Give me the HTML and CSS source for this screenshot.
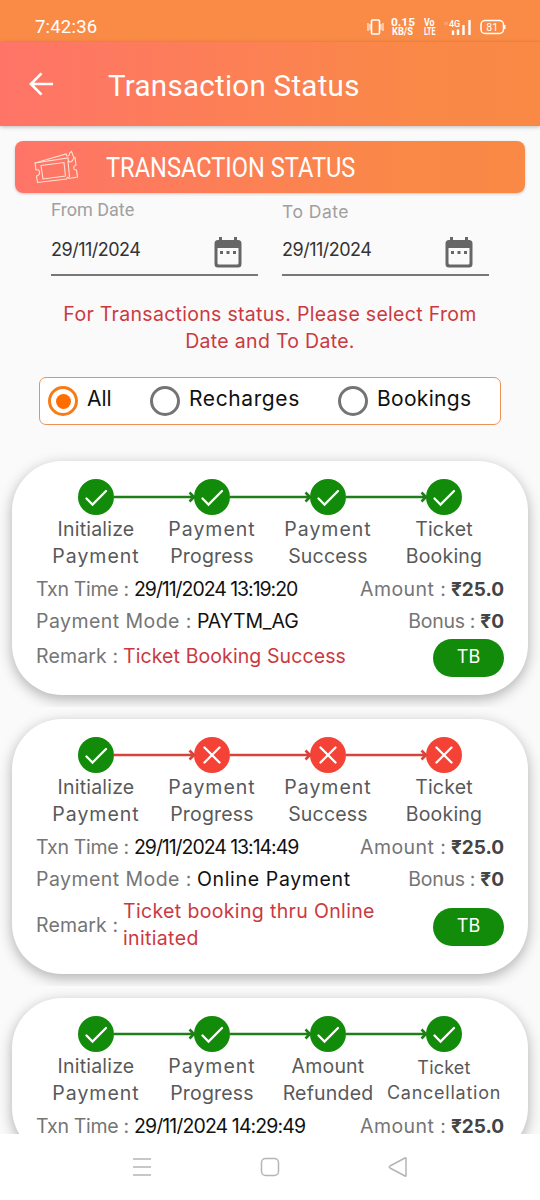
FILE: index.html
```html
<!DOCTYPE html>
<html lang="en">
<head>
<meta charset="utf-8">
<title>Transaction Status</title>
<link rel="stylesheet" href="styles.css">
</head>
<body>
<svg class="defs" aria-hidden="true">
  <symbol id="ok" viewBox="0 0 36 36"><circle cx="18" cy="18" r="18" fill="#128a0a"/><path d="M8.500 19.500L14.500 25.500L28 12" fill="none" stroke="#fff" stroke-width="2.300" stroke-linecap="round"/></symbol>
  <symbol id="fail" viewBox="0 0 36 36"><circle cx="18" cy="18" r="18" fill="#f44336"/><path d="M10.500 10.500L25.500 25.500M25.500 10.500L10.500 25.500" fill="none" stroke="#fff" stroke-width="2.300" stroke-linecap="round"/></symbol>
  <symbol id="arrow" viewBox="0 0 82 12"><path d="M0 6H80M75.500 1.500L80 6L75.500 10.500" fill="none" stroke="currentColor" stroke-width="2.600"/></symbol>
  <symbol id="calendar" viewBox="0 0 28 32"><path d="M4 3H24Q27.500 3 27.500 6.500V27Q27.500 30.500 24 30.500H4Q0.500 30.500 0.500 27V6.500Q0.500 3 4 3ZM3.500 11V26Q3.500 27.500 5 27.500H23Q24.500 27.500 24.500 26V11Z" fill="#666" fill-rule="evenodd"/><path d="M5 0H8V4H5ZM20 0H23V4H20ZM6 14H9V17H6ZM12.500 14H15.500V17H12.500ZM19 14H22V17H19Z" fill="#666"/></symbol>
</svg>
<div class="screen">
  <header class="statusbar">
    <span class="clock">7:42:36</span>
    <div class="indicators">
      <svg class="vibrate" viewBox="0 0 17 16"><rect x="4.500" y="1" width="8" height="14" rx="1" fill="none" stroke="#fff" stroke-width="1.600"/><path d="M1 4V12M16 4V12M3 5V11M14 5V11" stroke="#fff" stroke-width="1"/></svg>
      <svg class="speed" viewBox="0 0 25 20"><text x="0" y="9" textLength="24" lengthAdjust="spacingAndGlyphs" class="s1">0.15</text><text x="1" y="18" textLength="21" lengthAdjust="spacingAndGlyphs" class="s2">KB/S</text></svg>
      <svg class="volte" viewBox="0 0 12 20"><text x="0" y="9" textLength="10.500" lengthAdjust="spacingAndGlyphs" class="s2">Vo</text><text x="0" y="18" textLength="11.500" lengthAdjust="spacingAndGlyphs" class="s2">LTE</text></svg>
      <svg class="signal" viewBox="0 0 27 16"><text x="5" y="8" class="net">4G</text><path d="M1 3V6M3 3V6" stroke="#fff" opacity=".35"/><path d="M9 11.500V16M14 10.500V16M19.500 6V16M25.500 1V16" stroke="#fff" stroke-width="2.400"/></svg>
      <svg class="battery" viewBox="0 0 26 16"><rect x="1" y="1.500" width="22.500" height="13" rx="4" fill="none" stroke="#fff" stroke-width="1.500"/><path d="M24.800 6V10" stroke="#fff" stroke-width="1.400"/><text x="12.200" y="11.700" text-anchor="middle" class="level">81</text></svg>
    </div>
  </header>
  <nav class="appbar">
    <svg class="back" viewBox="0 0 26 24"><path d="M25 12H2M13 1L2 12L13 23" fill="none" stroke="#fff" stroke-width="2.800"/></svg>
    <h1>Transaction Status</h1>
  </nav>
  <main class="content">
    <div class="banner">
      <svg class="tickets" viewBox="0 0 44 34" fill="none" stroke="#ffe0d5" stroke-width="1.100"><path d="M1 13L34 8Q34 12 36.500 12Q39 11.500 39.500 8L41 7.500L42 15Q39 16 40 19Q40.500 20 42.500 20L43.500 27L35 28.500Q34 26 32.500 29L3.500 32.500L2.500 26Q6 25 5.500 22Q5 19 2 20Z"/><path d="M7 15.500L30 12.500L31.500 26L9 29ZM34 11L35.500 27M1 13L32 4L33 6Q36 6 35.500 3L37.500 1.500L40 8"/></svg>
      <h2>TRANSACTION STATUS</h2>
    </div>
    <div class="dates">
      <div class="field"><label class="from">From Date</label><div class="value"><span>29/11/2024</span><svg class="cal"><use href="#calendar"/></svg></div></div>
      <div class="field"><label class="to">To Date</label><div class="value"><span>29/11/2024</span><svg class="cal"><use href="#calendar"/></svg></div></div>
    </div>
    <p class="hint">For Transactions status. Please select From<br>Date and To Date.</p>
    <div class="filters">
      <div class="option all"><i class="radio on"></i><span>All</span></div>
      <div class="option recharges"><i class="radio"></i><span>Recharges</span></div>
      <div class="option bookings"><i class="radio"></i><span>Bookings</span></div>
    </div>
    <section class="slot"><article class="card">
      <div class="steps">
        <div class="step"><svg class="dot"><use href="#ok"/></svg><p>Initialize<br><span class="wide">Payment</span></p></div>
        <div class="step"><svg class="link green"><use href="#arrow"/></svg><svg class="dot"><use href="#ok"/></svg><p><span class="wide">Payment</span><br>Progress</p></div>
        <div class="step"><svg class="link green"><use href="#arrow"/></svg><svg class="dot"><use href="#ok"/></svg><p><span class="wide">Payment</span><br>Success</p></div>
        <div class="step"><svg class="link green"><use href="#arrow"/></svg><svg class="dot"><use href="#ok"/></svg><p>Ticket<br>Booking</p></div>
      </div>
      <div class="row"><div><span class="k time">Txn Time :</span><span class="v stamp">29/11/2024 13:19:20</span></div><div><span class="k amount">Amount :</span><b class="sum">₹25.0</b></div></div>
      <div class="row"><div><span class="k mode">Payment Mode :</span><span class="v code">PAYTM_AG</span></div><div><span class="k bonus">Bonus :</span><b>₹0</b></div></div>
      <div class="row remark"><div><span class="k rem">Remark :</span><span class="note">Ticket Booking Success</span></div><button class="tb">TB</button></div>
    </article></section>
    <section class="slot"><article class="card">
      <div class="steps">
        <div class="step"><svg class="dot"><use href="#ok"/></svg><p>Initialize<br><span class="wide">Payment</span></p></div>
        <div class="step"><svg class="link red"><use href="#arrow"/></svg><svg class="dot"><use href="#fail"/></svg><p><span class="wide">Payment</span><br>Progress</p></div>
        <div class="step"><svg class="link red"><use href="#arrow"/></svg><svg class="dot"><use href="#fail"/></svg><p><span class="wide">Payment</span><br>Success</p></div>
        <div class="step"><svg class="link red"><use href="#arrow"/></svg><svg class="dot"><use href="#fail"/></svg><p>Ticket<br>Booking</p></div>
      </div>
      <div class="row"><div><span class="k time">Txn Time :</span><span class="v stamp">29/11/2024 13:14:49</span></div><div><span class="k amount">Amount :</span><b class="sum">₹25.0</b></div></div>
      <div class="row"><div><span class="k mode">Payment Mode :</span><span class="v online">Online Payment</span></div><div><span class="k bonus">Bonus :</span><b>₹0</b></div></div>
      <div class="row remark"><div><span class="k rem">Remark :</span><span class="note long">Ticket booking thru Online<br>initiated</span></div><button class="tb">TB</button></div>
    </article></section>
    <section class="slot"><article class="card">
      <div class="steps">
        <div class="step"><svg class="dot"><use href="#ok"/></svg><p>Initialize<br><span class="wide">Payment</span></p></div>
        <div class="step"><svg class="link green"><use href="#arrow"/></svg><svg class="dot"><use href="#ok"/></svg><p><span class="wide">Payment</span><br>Progress</p></div>
        <div class="step"><svg class="link green"><use href="#arrow"/></svg><svg class="dot"><use href="#ok"/></svg><p>Amount<br>Refunded</p></div>
        <div class="step"><svg class="link green"><use href="#arrow"/></svg><svg class="dot"><use href="#ok"/></svg><p class="small">Ticket<br><span class="cancel">Cancellation</span></p></div>
      </div>
      <div class="row"><div><span class="k time">Txn Time :</span><span class="v stamp late">29/11/2024 14:29:49</span></div><div><span class="k amount">Amount :</span><b class="sum">₹25.0</b></div></div>
    </article></section>
  </main>
  <footer class="navbar">
    <svg viewBox="0 0 20 20"><path d="M1 2H19M1 10H19M1 18H19"/></svg>
    <svg viewBox="0 0 20 20"><rect x="1.500" y="1.500" width="17" height="17" rx="4"/></svg>
    <svg viewBox="0 0 20 20"><path d="M18 1.500V18.500Q18 19.500 17 19L2 11Q0.500 10 2 9L17 1Q18 0.500 18 1.500Z"/></svg>
  </footer>
</div>
</body>
</html>
```
FILE: styles.css
```css
* { box-sizing: border-box; }
body { margin: 0; background: #fff; font-family: Inter, "Noto Sans", sans-serif; font-size: 19.500px; }
h1, h2, p { margin: 0; font-weight: 400; }
svg { display: block; flex: none; }
.defs { position: absolute; width: 0; height: 0; }
.screen { width: 540px; height: 1200px; display: flex; flex-direction: column; overflow: hidden; }

.statusbar { height: 42px; flex: none; background: #f98b46; color: #fff; display: flex; justify-content: space-between; align-items: center; padding: 12px 34px 0 35px; }
.clock { font: 400 18.5px/26px Roboto, sans-serif; letter-spacing: .2px; }
.indicators { display: flex; align-items: center; }
.vibrate { width: 17px; height: 16px; margin-right: 7px; }
.speed { width: 25px; height: 20px; margin-right: 8px; }
.volte { width: 12px; height: 20px; margin-right: 8px; }
.s1 { font: 700 11.500px Roboto, sans-serif; fill: #fff; }
.s2 { font: 700 10px Roboto, sans-serif; fill: #fff; }
.signal { width: 27px; height: 16px; margin-right: 9px; }
.net { font: 500 9px Roboto, sans-serif; fill: #fff; }
.battery { width: 26px; height: 16px; }
.level { font: 400 10.500px Roboto, sans-serif; fill: #fff; }

.appbar { height: 84px; flex: none; position: relative; background: linear-gradient(90deg, #ff7468, #fa8848 75%, #f98945); color: #fff; display: flex; align-items: center; padding-left: 29px; box-shadow: 0 1px 4px rgba(0,0,0,.25); z-index: 1; }
.back { width: 25px; height: 24px; margin: -1px 54px 0 0; }
.appbar h1 { font: 400 29.500px/36px Roboto, sans-serif; letter-spacing: .28px; padding-top: 3px; }

.content { flex: 1; min-height: 0; overflow: hidden; background: #fafafa; padding-top: 15px; }
.banner { height: 52px; margin: 0 15px; border-radius: 8px; background: linear-gradient(90deg, #ff7468, #fa8848 75%, #f98945); box-shadow: 0 1px 3px rgba(0,0,0,.2); color: #fff; display: flex; align-items: center; padding-left: 19px; }
.tickets { width: 44px; height: 34px; margin-right: 28px; }
.banner h2 { font: 400 27.500px/36px Roboto, sans-serif; transform: scaleX(.859); transform-origin: left; white-space: nowrap; padding-top: 2px; }
.dates { display: flex; gap: 24px; margin-left: 51px; height: 83px; }
.field { width: 207px; height: 83px; border-bottom: 2px solid #777; display: flex; flex-direction: column; }
.field label { color: #a0a0a0; font-size: 17.500px; letter-spacing: .5px; line-height: 24px; padding-top: 5px; height: 36px; }
.field .from { font-family: Roboto, sans-serif; font-size: 18px; letter-spacing: 0; }
.field .to { padding-top: 7px; }
.value { display: flex; justify-content: space-between; align-items: flex-start; padding: 8px 16px 0 0; color: #333; font-size: 18px; letter-spacing: -.5px; line-height: 25px; }
.cal { width: 28px; height: 32px; }
.hint { margin-top: 25px; color: #cb3940; text-align: center; line-height: 27px; letter-spacing: .3px; white-space: nowrap; }

.filters { height: 48px; width: 462px; margin: 22px 0 24px 39px; border: 1.500px solid #ed9254; border-radius: 7px; background: #fff; display: flex; align-items: center; padding-left: 8px; font-size: 21px; letter-spacing: .6px; color: #111; }
.option { display: flex; align-items: center; gap: 9px; white-space: nowrap; }
.option span { line-height: 28px; padding-bottom: 4px; }
.option.all { width: 102px; letter-spacing: 0; }
.option.recharges { width: 188px; }
.option.bookings { letter-spacing: .3px; }
.radio { width: 30px; height: 30px; border: 3px solid #747474; border-radius: 50%; display: grid; place-items: center; }
.radio.on { border-color: #f57c18; }
.radio.on::after { content: ""; width: 15px; height: 15px; border-radius: 50%; background: #ff6d00; }

.slot { padding: 12px; overflow: hidden; }
.card { background: #fff; border-radius: 50px; box-shadow: 0 4px 14px rgba(0,0,0,.3); padding: 18px 24px 16px; }
.steps { display: grid; grid-template-columns: repeat(4, 116px); margin-left: 2px; color: #595959; height: 94px; }
.step { position: relative; display: flex; flex-direction: column; align-items: center; text-align: center; }
.dot { width: 36px; height: 36px; }
.step p { line-height: 27px; padding-top: 1px; letter-spacing: .2px; white-space: nowrap; }
.step .wide { letter-spacing: 1px; }
.step .small { font-size: 18px; letter-spacing: .2px; line-height: 25px; padding-top: 3px; }
.cancel { letter-spacing: .75px; }
.link { position: absolute; width: 82px; height: 12px; left: -40px; top: 12px; }
.green { color: #1e7f18; }
.red { color: #d8433b; }
.row { display: flex; justify-content: space-between; align-items: center; height: 32px; white-space: nowrap; }
.row > div { display: flex; align-items: center; line-height: 27px; }
.k { color: #757575; }
.v { color: #111; }
.row b { color: #444; font-size: 19px; }
.time { width: 98px; letter-spacing: -.3px; }
.mode { width: 161px; letter-spacing: .45px; }
.amount { width: 91px; letter-spacing: .45px; }
.bonus { width: 72px; letter-spacing: -.3px; }
.rem { width: 87px; letter-spacing: .15px; }
.sum { width: 53px; }
.stamp { letter-spacing: -1.050px; }
.stamp.late { letter-spacing: -.9px; }
.code { letter-spacing: -.2px; }
.online { letter-spacing: .65px; }
.remark { height: auto; min-height: 42px; }
.remark > div { padding: 3px 0 6px; }
.note { color: #cb3940; letter-spacing: .1px; }
.note.long { letter-spacing: .35px; }
.tb { width: 71px; height: 38px; padding: 0 0 3px; border: 0; border-radius: 19px; background: #128a0a; color: #fff; font: 400 18px Inter, sans-serif; }

.navbar { height: 66px; flex: none; background: #fff; display: flex; justify-content: center; align-items: center; gap: 108px; }
.navbar svg { width: 20px; height: 20px; fill: none; stroke: #b5b5b5; stroke-width: 1.500; }
```
